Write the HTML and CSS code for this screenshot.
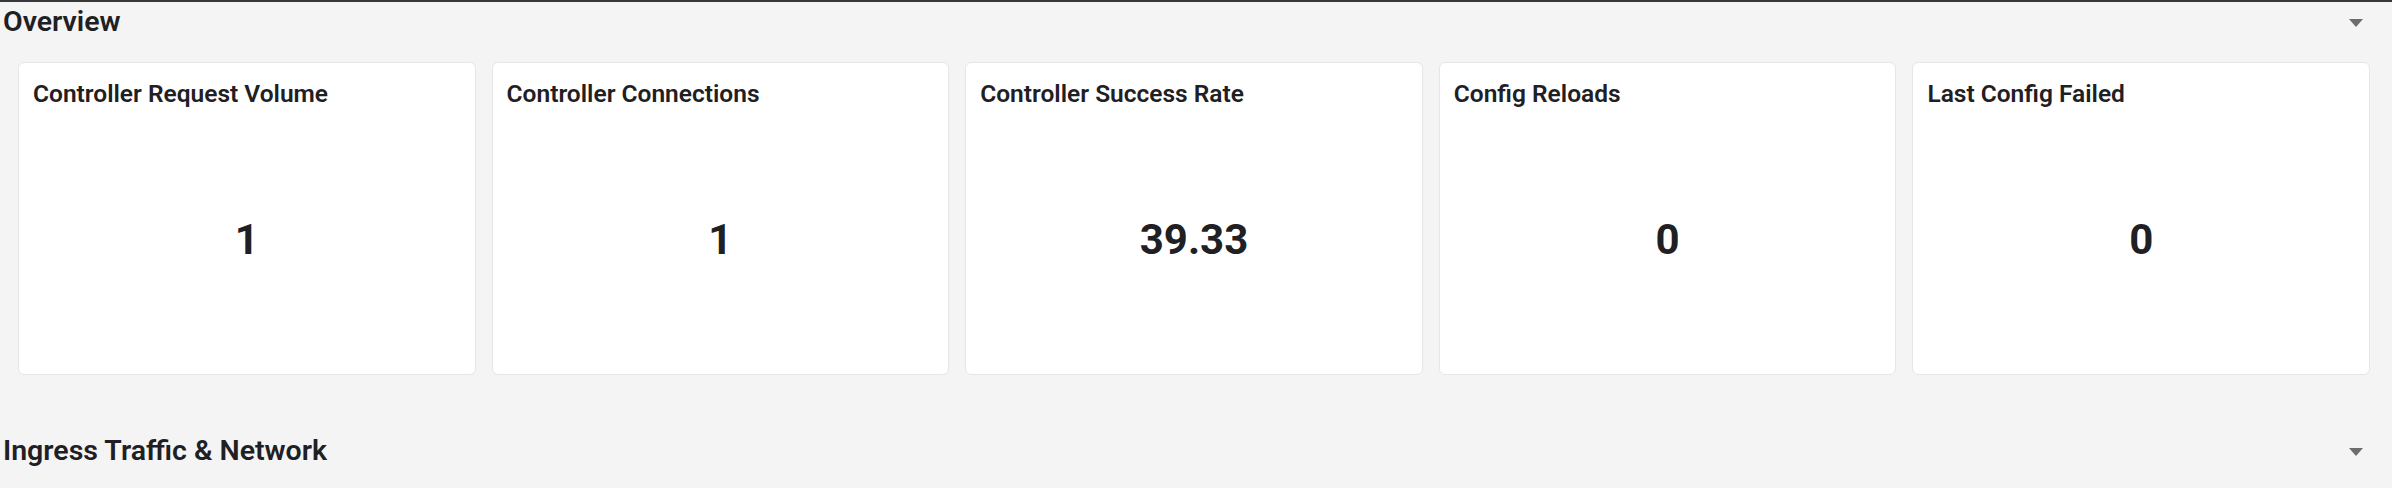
FILE: index.html
```html
<!DOCTYPE html>
<html lang="en">

<head>
    <meta charset="utf-8">
    <meta name="viewport" content="width=device-width, initial-scale=1.0">
    <title>Ingress Controller</title>
    <link rel="stylesheet" href="styles.css">
</head>

<body>
    <section class="row">
        <header class="row-header">
            <h2 class="row-title">Overview</h2>
            <span class="row-toggle"></span>
        </header>

        <div class="panels">
            <article class="panel">
                <h3 class="panel-title">Controller Request Volume</h3>
                <p class="panel-value">1</p>
            </article>
            <article class="panel">
                <h3 class="panel-title">Controller Connections</h3>
                <p class="panel-value">1</p>
            </article>
            <article class="panel">
                <h3 class="panel-title">Controller Success Rate</h3>
                <p class="panel-value">39.33</p>
            </article>
            <article class="panel">
                <h3 class="panel-title">Config Reloads</h3>
                <p class="panel-value">0</p>
            </article>
            <article class="panel">
                <h3 class="panel-title">Last Config Failed</h3>
                <p class="panel-value">0</p>
            </article>
        </div>
    </section>

    <section class="row row-collapsed">
        <header class="row-header">
            <h2 class="row-title">Ingress Traffic &amp; Network</h2>
            <span class="row-toggle"></span>
        </header>
    </section>
</body>

</html>
```

FILE: styles.css
```css
body {
    margin: 0;
    background-color: #f4f4f4;
    border-top: 2px solid #35373a;
    font-family: Roboto, "Noto Sans", sans-serif;
    color: #1f2023;
}

.row-header {
    display: flex;
    justify-content: space-between;
    align-items: center;
    padding: 3px 29px 0 3px;
}

.row-title {
    margin: 0;
    font-size: 28.5px;
    font-weight: 600;
    line-height: 34px;
}

/* little triangle used as the collapse arrow */
.row-toggle {
    width: 0;
    height: 0;
    border-left: 7px solid transparent;
    border-right: 7px solid transparent;
    border-top: 8px solid #6c6d70;
    margin-top: 1px;
}

.panels {
    display: grid;
    grid-template-columns: repeat(5, 1fr);
    gap: 16px;
    padding: 23px 22px 0 18px;
}

.panel {
    display: flex;
    flex-direction: column;
    height: 313px;
    box-sizing: border-box;
    background-color: #ffffff;
    border: 1px solid #e6e6e6;
    border-radius: 6px;
}

.panel-title {
    margin: 0;
    padding: 16px 14px 0;
    font-size: 24.5px;
    font-weight: 600;
    line-height: 30px;
}

.panel-value {
    flex: 1;
    display: flex;
    align-items: center;
    justify-content: center;
    margin: 0;
    padding-bottom: 4px;
    font-size: 42px;
    font-weight: 700;
    line-height: 50px;
}

.row-collapsed {
    margin-top: 56px;
}
```
